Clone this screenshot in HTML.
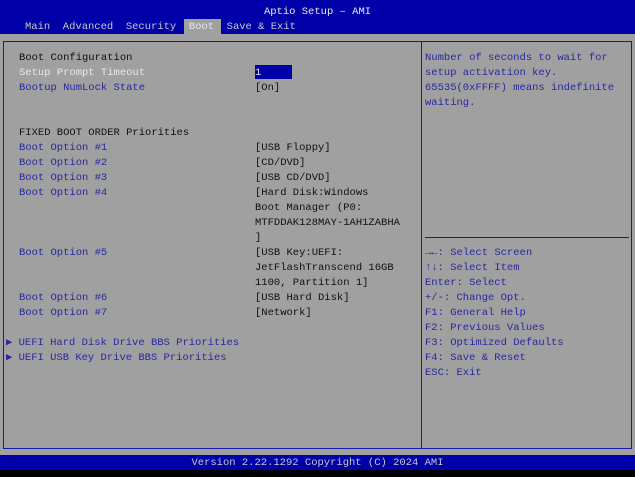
<!DOCTYPE html>
<html><head><style>
*{margin:0;padding:0;box-sizing:border-box}
body{width:635px;height:477px;background:#000;position:relative;overflow:hidden;font-family:"Liberation Mono","DejaVu Sans Mono",monospace;font-size:10.5px;}
.t{position:absolute;white-space:pre;line-height:15px;}
#top{position:absolute;left:0;top:0;width:635px;height:34px;background:#0000a8}
#body{position:absolute;left:0;top:34px;width:635px;height:421px;background:#a0a0a0}
#bot{position:absolute;left:0;top:455px;width:635px;height:15px;background:#0000a8}
.box{position:absolute;border:1px solid #1818a8}
.w{color:#e8e8e8}.g{color:#c8c8c8}.b{color:#2828a0}.k{color:#101010}
</style></head><body>
<div id="top"></div><div id="body"></div><div id="bot"></div>
<div class="t w" style="left:0;width:635px;text-align:center;top:5px">Aptio Setup – AMI</div>
<div style="position:absolute;left:184px;top:19px;width:37px;height:15px;background:#a0a0a0"></div>
<div class="t g" style="left:25px;top:20px">Main  Advanced  Security  <span class="w">Boot</span>  Save &amp; Exit</div>
<div class="box" style="left:3px;top:41px;width:419px;height:408px"></div>
<div class="box" style="left:421px;top:41px;width:211px;height:408px"></div>
<div style="position:absolute;left:425px;top:237px;width:204px;height:1px;background:#1818a8"></div>
<div style="position:absolute;left:255px;top:65px;width:37px;height:14px;background:#0000a8"></div>
<div class="t k" style="left:19px;top:51px">Boot Configuration</div>
<div class="t w" style="left:19px;top:66px">Setup Prompt Timeout</div>
<div class="t w" style="left:255px;top:66px">1</div>
<div class="t b" style="left:19px;top:81px">Bootup NumLock State</div>
<div class="t k" style="left:255px;top:81px">[On]</div>
<div class="t k" style="left:19px;top:126px">FIXED BOOT ORDER Priorities</div>
<div class="t k" style="left:255px;top:141px">[USB Floppy]
[CD/DVD]
[USB CD/DVD]
[Hard Disk:Windows
Boot Manager (P0:
MTFDDAK128MAY-1AH1ZABHA
]
[USB Key:UEFI:
JetFlashTranscend 16GB
1100, Partition 1]
[USB Hard Disk]
[Network]</div>
<div class="t b" style="left:19px;top:141px">Boot Option #1
Boot Option #2
Boot Option #3
Boot Option #4</div>
<div class="t b" style="left:19px;top:246px">Boot Option #5</div>
<div class="t b" style="left:19px;top:291px">Boot Option #6
Boot Option #7</div>
<div class="t b" style="left:6px;top:336px">▶ UEFI Hard Disk Drive BBS Priorities
▶ UEFI USB Key Drive BBS Priorities</div>
<div class="t b" style="left:425px;top:51px">Number of seconds to wait for
setup activation key.
65535(0xFFFF) means indefinite
waiting.</div>
<div class="t b" style="left:425px;top:246px"><b>→←</b>: Select Screen
<b>↑↓</b>: Select Item
Enter: Select
+/-: Change Opt.
F1: General Help
F2: Previous Values
F3: Optimized Defaults
F4: Save &amp; Reset
ESC: Exit</div>
<div class="t g" style="left:0;width:635px;text-align:center;top:456px">Version 2.22.1292 Copyright (C) 2024 AMI</div>
</body></html>
